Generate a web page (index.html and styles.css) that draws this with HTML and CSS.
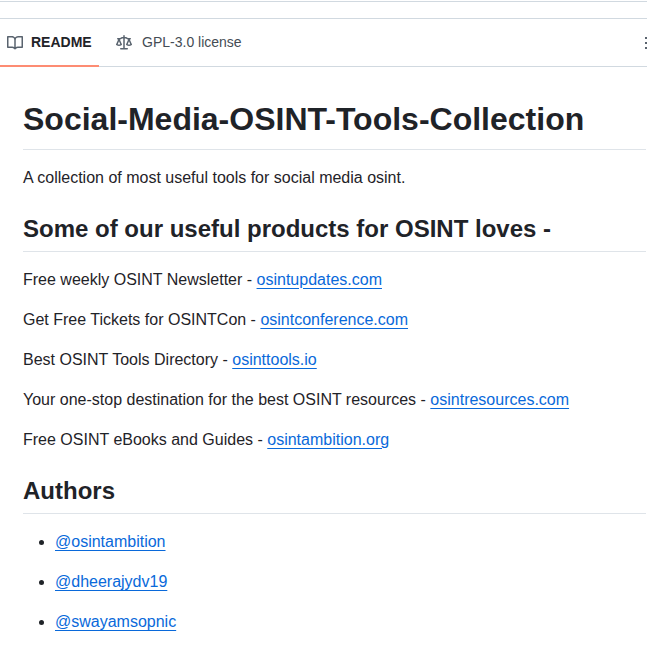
FILE: index.html
```html
<!DOCTYPE html>
<html lang="en">
<head>
    <meta charset="UTF-8">
    <meta name="viewport" content="width=device-width, initial-scale=1.0">
    <title>README</title>
    <link rel="stylesheet" href="styles.css">
</head>
<body>
    <div class="top-strip"></div>

    <nav class="tabs">
        <a href="#" class="tab tab-active">
            <svg class="tab-icon" width="16" height="16" viewBox="0 0 16 16" fill="currentColor"><path d="M0 1.75A.75.75 0 0 1 .75 1h4.253c1.227 0 2.317.59 3 1.501A3.743 3.743 0 0 1 11.006 1h4.245a.75.75 0 0 1 .75.75v10.5a.75.75 0 0 1-.75.75h-4.507a2.25 2.25 0 0 0-1.591.659l-.622.621a.75.75 0 0 1-1.06 0l-.622-.621A2.25 2.25 0 0 0 5.258 13H.75a.75.75 0 0 1-.75-.75Zm7.251 10.324.004-5.073-.002-2.253A2.25 2.25 0 0 0 5.003 2.5H1.5v9h3.757a3.75 3.75 0 0 1 1.994.574ZM8.755 4.75l-.004 7.322a3.752 3.752 0 0 1 1.992-.572H14.5v-9h-3.495a2.25 2.25 0 0 0-2.25 2.25Z"></path></svg>
            <span>README</span>
        </a>
        <a href="#" class="tab tab-license">
            <svg class="tab-icon" width="16" height="16" viewBox="0 0 16 16" fill="currentColor"><path d="M8.75.75V2h.985c.304 0 .603.08.867.231l1.29.736c.038.022.08.033.124.033h2.234a.75.75 0 0 1 0 1.5h-.427l2.111 4.692a.75.75 0 0 1-.154.838l-.53-.53.529.531-.001.002-.002.002-.006.006-.006.005-.01.01-.045.04c-.21.176-.441.327-.686.45C14.556 10.78 13.88 11 13 11a4.498 4.498 0 0 1-2.023-.454 3.544 3.544 0 0 1-.686-.45l-.045-.04-.016-.015-.006-.006-.004-.004v-.001a.75.75 0 0 1-.154-.838L12.178 4.5h-.162c-.305 0-.604-.079-.868-.231l-1.29-.736a.245.245 0 0 0-.124-.033H8.75V13h2.5a.75.75 0 0 1 0 1.5h-6.5a.75.75 0 0 1 0-1.5h2.5V3.5h-.984a.245.245 0 0 0-.124.033l-1.289.737c-.265.15-.564.23-.869.23h-.162l2.112 4.692a.75.75 0 0 1-.154.838l-.53-.53.529.531-.001.002-.002.002-.006.006-.016.015-.045.04c-.21.176-.441.327-.686.45C4.556 10.78 3.88 11 3 11a4.498 4.498 0 0 1-2.023-.454 3.544 3.544 0 0 1-.686-.45l-.045-.04-.016-.015-.006-.006-.004-.004v-.001a.75.75 0 0 1-.154-.838L2.178 4.5H1.75a.75.75 0 0 1 0-1.5h2.234a.249.249 0 0 0 .125-.033l1.288-.737c.265-.15.564-.23.869-.23h.984V.75a.75.75 0 0 1 1.5 0Zm2.945 8.477c.285.135.718.273 1.305.273s1.02-.138 1.305-.273L13 6.327Zm-10 0c.285.135.718.273 1.305.273s1.02-.138 1.305-.273L3 6.327Z"></path></svg>
            <span>GPL-3.0 license</span>
        </a>
        <div class="tabs-more">
            <span class="dot"></span>
            <span class="dot"></span>
            <span class="dot"></span>
        </div>
    </nav>

    <article class="readme">
        <h1>Social-Media-OSINT-Tools-Collection</h1>
        <p>A collection of most useful tools for social media osint.</p>

        <h2>Some of our useful products for OSINT loves -</h2>
        <p>Free weekly OSINT Newsletter - <a href="#">osintupdates.com</a></p>
        <p>Get Free Tickets for OSINTCon - <a href="#">osintconference.com</a></p>
        <p>Best OSINT Tools Directory - <a href="#">osinttools.io</a></p>
        <p>Your one-stop destination for the best OSINT resources - <a href="#">osintresources.com</a></p>
        <p>Free OSINT eBooks and Guides - <a href="#">osintambition.org</a></p>

        <h2>Authors</h2>
        <ul>
            <li><a href="#">@osintambition</a></li>
            <li><a href="#">@dheerajydv19</a></li>
            <li><a href="#">@swayamsopnic</a></li>
        </ul>
    </article>
</body>
</html>
```

FILE: styles.css
```css
html, body {
    height: 646px;
    overflow: hidden;
}
body {
    font-family: "Liberation Sans", Arial, sans-serif;
    font-size: 16px;
    line-height: 1.5;
    margin: 0;
    padding: 0;
    background-color: #ffffff;
    color: #1f2328;
}
.top-strip {
    height: 16px;
    margin-top: 1px;
    border-top: 1px solid #d1d9e0;
}
.tabs {
    display: flex;
    align-items: stretch;
    height: 47px;
    border-top: 1px solid #d1d9e0;
    border-bottom: 1px solid #d1d9e0;
}
.tab {
    display: flex;
    align-items: center;
    gap: 8px;
    padding: 0 8px 0 7px;
    margin-bottom: -1px;
    font-size: 14px;
    line-height: 20px;
    color: #454c54;
    text-decoration: none;
    border-bottom: 2px solid transparent;
}
.tab-icon {
    color: #59636e;
    flex-shrink: 0;
    margin-top: 2px;
}
.tab-active {
    color: #1f2328;
    font-weight: 600;
    padding-right: 7.7px;
    border-bottom-color: #fd8c73;
}
.tab-license {
    gap: 10px;
    margin-left: 9.7px;
}
.tabs-more {
    margin-left: auto;
    display: flex;
    flex-direction: column;
    justify-content: center;
    gap: 3px;
    width: 2px;
    padding-top: 1px;
}
.dot {
    display: block;
    width: 2px;
    height: 2px;
    background-color: #59636e;
}
.readme {
    padding: 32px 1px 0 23px;
}
h1, h2 {
    font-weight: 600;
    line-height: 1.25;
    margin: 24px 0 16px;
    border-bottom: 1px solid #d1d9e0b3;
}
h1 {
    font-size: 32px;
    margin-top: 0;
    padding-bottom: 9.6px;
}
h2 {
    font-size: 24px;
    padding-bottom: 7.2px;
}
p {
    margin: 0 0 16px;
}
.readme a {
    color: #0969da;
    text-decoration: underline;
    text-underline-offset: .2rem;
}
ul {
    margin: 0;
    padding-left: 32px;
}
li {
    margin-top: 16px;
}
li:first-child {
    margin-top: 0;
}
```
